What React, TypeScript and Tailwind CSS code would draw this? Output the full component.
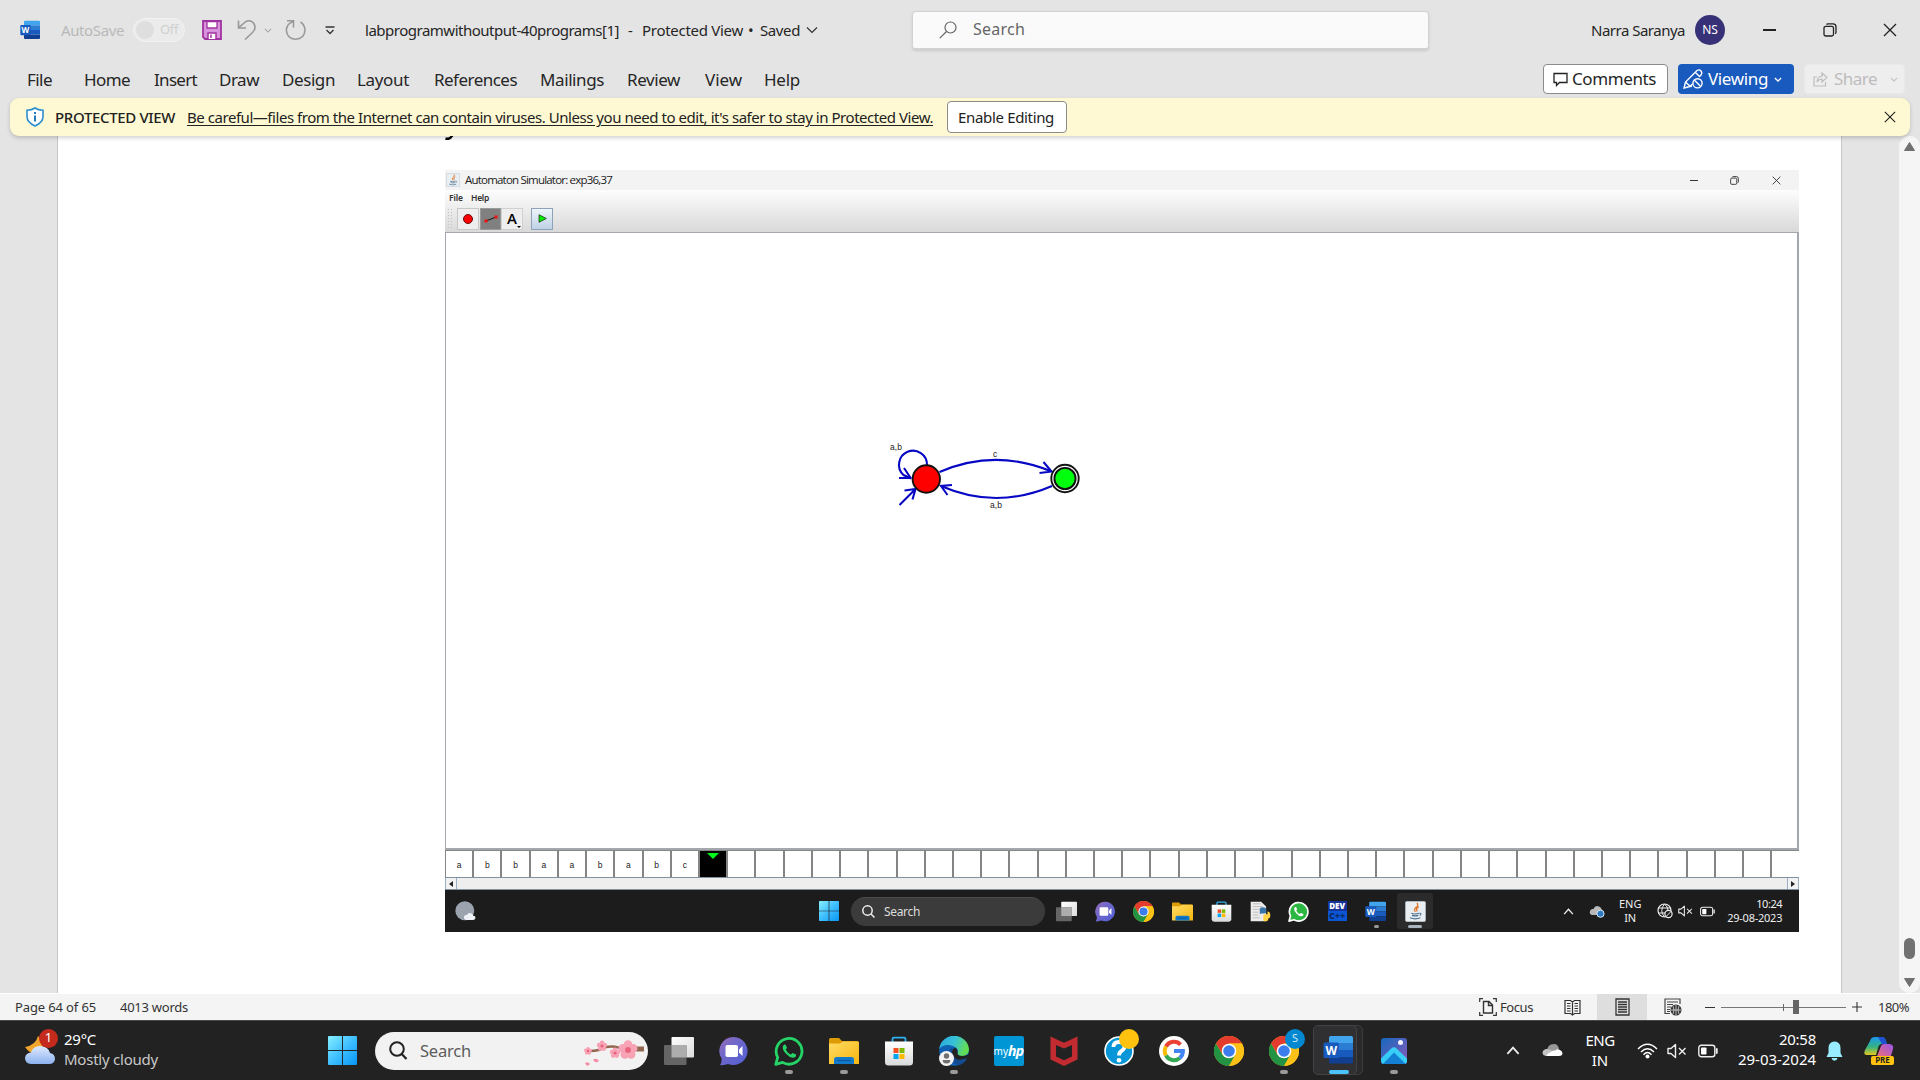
import { useLayoutEffect, useRef, type ReactNode } from "react";

/* Text that is spaced so that it exactly fills the width of its box. */
function Fit({ className, children }: { className: string; children: string }) {
  const box = useRef<HTMLDivElement>(null);
  const ink = useRef<HTMLSpanElement>(null);
  useLayoutEffect(() => {
    const b = box.current;
    const s = ink.current;
    if (!b || !s) return;
    s.style.letterSpacing = "0px";
    const diff = b.clientWidth - s.getBoundingClientRect().width;
    s.style.letterSpacing = `${diff / children.length}px`;
  }, [children]);
  return (
    <div ref={box} className={`shrink-0 whitespace-nowrap ${className}`}>
      <span ref={ink}>{children}</span>
    </div>
  );
}

type IconProps = { className?: string };

function Svg({ className = "", box = "0 0 30 30", children }: { className?: string; box?: string; children: ReactNode }) {
  return (
    <svg viewBox={box} className={`block shrink-0 ${className}`} fill="none">
      {children}
    </svg>
  );
}

function WordIcon({ className }: IconProps) {
  return (
    <Svg className={className}>
      <path d="M6 2.500Q6 1 7.500 1H28.500Q30 1 30 2.500V8H6z" fill="#41a5ee" />
      <path d="M6 8H30V15H6z" fill="#2b7cd3" />
      <path d="M6 15H30V22H6z" fill="#185abd" />
      <path d="M6 22H30V27Q30 28.500 28.500 28.500H7.500Q6 28.500 6 27z" fill="#103f91" />
      <rect x="0.500" y="7.500" width="15.500" height="15.500" rx="1.500" fill="#185abd" />
      <text x="8.200" y="19.600" textAnchor="middle" fontFamily="Noto Sans" fontWeight="700" fontSize="12" fill="#fff">W</text>
    </Svg>
  );
}

function ChromeIcon({ className }: IconProps) {
  return (
    <Svg className={className}>
      <circle cx="15" cy="15" r="15" fill="#fbc116" />
      <path d="M15 7.500H28A15 15 0 0 0 2 7.500L8.500 18.500z" fill="#e33b2e" />
      <path d="M2 7.500A15 15 0 0 0 15 30L21.500 18.750L15 22L8.500 18.750z" fill="#229342" />
      <path d="M21.500 18.750L15 30A15 15 0 0 0 28 7.500H15z" fill="#fbc116" />
      <circle cx="15" cy="15" r="7.300" fill="#fff" />
      <circle cx="15" cy="15" r="5.800" fill="#3b7ded" />
    </Svg>
  );
}

function TeamsIcon({ className }: IconProps) {
  return (
    <Svg className={className}>
      <defs>
        <linearGradient id="teams" x1="0" y1="0" x2="1" y2="1">
          <stop offset="0" stopColor="#9a6cb4" />
          <stop offset="0.350" stopColor="#7468c8" />
          <stop offset="1" stopColor="#4f5fd6" />
        </linearGradient>
      </defs>
      <path d="M15 1A14.300 14 0 1 1 9 28Q5 29.500 1 29Q3 26 2.600 22.500A14.300 14 0 0 1 15 1z" fill="url(#teams)" />
      <rect x="6.500" y="9" width="12.500" height="12" rx="1.800" fill="#fff" />
      <path d="M20 13.500L23.500 10V20L20 16.500z" fill="#fff" />
    </Svg>
  );
}

function FolderIcon({ className }: IconProps) {
  return (
    <Svg className={className}>
      <defs>
        <linearGradient id="folder" x1="0" y1="0" x2="1" y2="1">
          <stop offset="0" stopColor="#ffdc66" />
          <stop offset="1" stopColor="#f7b50e" />
        </linearGradient>
      </defs>
      <path d="M0 3.500Q0 2 1.500 2H10L13 5H28Q30 5 30 7V16H0z" fill="#dd9b06" />
      <path d="M0 7.500H11L14 5.500H28.500Q30 5.500 30 7V28H0z" fill="url(#folder)" />
      <path d="M5 28V23.500Q5 21 7.500 21H22.500Q25 21 25 23.500V28z" fill="#117acb" />
      <path d="M8 24.500H22" stroke="#0a56a0" strokeWidth="1.200" />
    </Svg>
  );
}

function StoreIcon({ className }: IconProps) {
  return (
    <Svg className={className}>
      <defs>
        <linearGradient id="store" x1="0" y1="0" x2="0" y2="1">
          <stop offset="0" stopColor="#fff" />
          <stop offset="1" stopColor="#d9dadb" />
        </linearGradient>
      </defs>
      <path d="M8.500 6V3Q8.500 1.700 9.800 1.700H20.200Q21.500 1.700 21.500 3V6" stroke="#2db0ee" strokeWidth="1.800" />
      <path d="M1 5.500H29V26Q29 29.500 25.500 29.500H4.500Q1 29.500 1 26z" fill="url(#store)" />
      <path d="M9.500 12H14.500V17H9.500z" fill="#f25022" />
      <path d="M15.500 12H20.500V17H15.500z" fill="#7fba00" />
      <path d="M9.500 18H14.500V23H9.500z" fill="#00a4ef" />
      <path d="M15.500 18H20.500V23H15.500z" fill="#ffb900" />
    </Svg>
  );
}

function TaskViewIcon({ className }: IconProps) {
  return (
    <Svg className={className}>
      <defs>
        <linearGradient id="tv" x1="0" y1="0" x2="1" y2="1">
          <stop offset="0" stopColor="#fff" />
          <stop offset="1" stopColor="#dcdcdc" />
        </linearGradient>
      </defs>
      <rect x="7.500" y="1" width="22.500" height="20.500" rx="1" fill="url(#tv)" />
      <rect x="0" y="9" width="22.500" height="20" rx="1" fill="#656565" />
      <path d="M7.500 9H22.500V21.500H7.500z" fill="#adadad" />
    </Svg>
  );
}

function StartIcon({ className }: IconProps) {
  return (
    <Svg className={className}>
      <defs>
        <linearGradient id="win" gradientUnits="userSpaceOnUse" x1="0" y1="0" x2="30" y2="30">
          <stop offset="0" stopColor="#86f0ff" />
          <stop offset="0.500" stopColor="#3fbfff" />
          <stop offset="1" stopColor="#0795f5" />
        </linearGradient>
      </defs>
      <path d="M0 1Q0 0 1 0H14.500V14.500H0zM15.500 0H29Q30 0 30 1V14.500H15.500zM0 15.500H14.500V30H1Q0 30 0 29zM15.500 15.500H30V29Q30 30 29 30H15.500z" fill="url(#win)" />
    </Svg>
  );
}

const PHONE =
  "M10.500 8.500Q9 9 8.700 11Q8.500 14 12 17.700Q15.500 21.500 19 21.800Q22 21.700 22.300 18.800L18.800 17Q18 17 17 18.600Q13.500 17.500 11.700 13.600L13 12L11.700 8.700z";

function WhatsAppIcon({ className }: IconProps) {
  return (
    <Svg className={className}>
      <path d="M1.800 28.300L3.700 21.400A12.900 12.900 0 1 1 8.500 26.400z" stroke="#25d366" strokeWidth="2.800" strokeLinejoin="round" />
      <path d={PHONE} fill="#25d366" />
    </Svg>
  );
}

function WhatsAppFilled({ className }: IconProps) {
  return (
    <Svg className={className}>
      <path d="M1.500 28.700L3.500 21.400A13.200 13.200 0 1 1 8.500 26.700z" fill="#2cb742" stroke="#fff" strokeWidth="2.400" strokeLinejoin="round" />
      <path d={PHONE} fill="#fff" />
    </Svg>
  );
}

function JavaIcon({ className }: IconProps) {
  return (
    <Svg className={className}>
      <rect x="0.500" y="0.500" width="29" height="29" rx="2.500" fill="#e9eef3" stroke="#aeb8c2" />
      <path d="M17 3Q20 6 15.500 9.500Q12 12.500 15 15.500M19.500 8Q15 11 17.500 15" stroke="#df7a32" strokeWidth="2" />
      <path d="M9 17.500Q14 19.500 20 17.500M10 20.500Q14.500 22 19 20.500M7 24Q15 27 22 24M20.500 17.500Q25 17 21 21" stroke="#4d7390" strokeWidth="1.600" />
    </Svg>
  );
}

function EdgeIcon({ className }: IconProps) {
  return (
    <Svg className={className}>
      <defs>
        <linearGradient id="edgeA" x1="0" y1="0" x2="1" y2="0.300">
          <stop offset="0" stopColor="#2aa6dd" />
          <stop offset="0.550" stopColor="#38c1d8" />
          <stop offset="1" stopColor="#62dd53" />
        </linearGradient>
      </defs>
      <circle cx="15" cy="15" r="14.800" fill="#0f62b4" />
      <path d="M0.200 13A15 15 0 0 1 30 13Q30 20 23 20Q18 20 18.500 17Q20 12 14 10Q5 7 0.200 13z" fill="url(#edgeA)" />
      <path d="M18.500 17Q19 12 15 12Q12 14 13.500 19Q15.500 24 21 24L28.200 22.500L31 23V17Q28 20.300 23 20Q18.500 20 18.500 17z" fill="#222" />
      <path d="M10 16Q10 26 19 29.300Q25 28 28 22.500Q22 25 17 23Q12 20 13 12Q10 13 10 16z" fill="#134a91" />
      <circle cx="7.500" cy="22.500" r="7.500" fill="#f4f4f4" />
      <circle cx="7.500" cy="20" r="2.700" fill="#707070" />
      <path d="M3.700 24H11.300Q11.500 27.500 7.500 27.500Q3.500 27.500 3.700 24z" fill="#707070" />
    </Svg>
  );
}

function McAfeeIcon({ className }: IconProps) {
  return (
    <Svg className={className}>
      <path d="M1.500 0.500L15 6.700L28.500 0.500V23.500L15 30L1.500 23.500z" fill="#c22c30" />
      <path d="M7 9L15 12.600L23 9V20.500L15 24.300L7 20.500z" fill="#222" />
    </Svg>
  );
}

function HelpIcon({ className }: IconProps) {
  return (
    <Svg className={className}>
      <circle cx="15" cy="15" r="14" fill="#0796d7" stroke="#fff" strokeWidth="1.600" />
      <path d="M9.500 11Q9.500 6 15 6Q20.500 6 20.500 10.500Q20.500 13 17.500 15Q15 16.500 15 19.500" stroke="#fff" strokeWidth="3.800" />
      <circle cx="15" cy="24.300" r="2.300" fill="#fff" />
    </Svg>
  );
}

function GoogleIcon({ className }: IconProps) {
  return (
    <Svg className={className}>
      <circle cx="15" cy="15" r="15" fill="#fff" />
      <g strokeWidth="4">
        <path d="M7 10.500A9 9 0 0 1 21.500 8.600" stroke="#ea4335" />
        <path d="M7 10.500A9 9 0 0 0 7 19.500" stroke="#fbbc05" />
        <path d="M7 19.500A9 9 0 0 0 20.800 21.900" stroke="#34a853" />
        <path d="M20.800 21.900A8.800 8.800 0 0 0 23.900 15H15" stroke="#4285f4" />
      </g>
    </Svg>
  );
}

function PhotosIcon({ className }: IconProps) {
  return (
    <Svg className={className} box="0 0 26 26">
      <defs>
        <linearGradient id="ph1" x1="0" y1="0" x2="1" y2="1">
          <stop offset="0" stopColor="#1468bd" />
          <stop offset="1" stopColor="#8c5bbd" />
        </linearGradient>
        <linearGradient id="ph2" x1="0" y1="1" x2="1" y2="0">
          <stop offset="0" stopColor="#2fc8f5" />
          <stop offset="1" stopColor="#3fd2f8" />
        </linearGradient>
      </defs>
      <rect width="26" height="26" rx="3" fill="url(#ph1)" />
      <path d="M2 26L13 14L26 23Q26 26 23 26z" fill="#1380d4" />
      <path d="M0 20.500L10.500 10.200Q13 8 15.500 10.500L26 20.500V23Q26 25 24.500 25.700L13 14.500L2 26Q0 25.500 0 23z" fill="url(#ph2)" />
      <circle cx="19.500" cy="4.500" r="2.500" fill="#f3f3fb" />
    </Svg>
  );
}

function Speaker({ className }: IconProps) {
  return (
    <Svg className={className} box="0 0 20 16">
      <path d="M1 5.500H4L8.500 1.500V14.500L4 10.500H1z" stroke="#eee" strokeWidth="1.400" strokeLinejoin="round" />
      <path d="M12 5L18.500 11.500M18.500 5L12 11.500" stroke="#eee" strokeWidth="1.400" />
    </Svg>
  );
}

function Battery({ className }: IconProps) {
  return (
    <Svg className={className} box="0 0 20 14">
      <rect x="0.800" y="1.300" width="16" height="11.400" rx="2.500" stroke="#eee" strokeWidth="1.400" />
      <rect x="3" y="3.500" width="5.500" height="7" rx="0.800" fill="#fff" />
      <path d="M18.800 5V9" stroke="#eee" strokeWidth="1.800" strokeLinecap="round" />
    </Svg>
  );
}

function Chevron({ className, up = false, color = "#333", width = 1.5 }: { className: string; up?: boolean; color?: string; width?: number }) {
  return (
    <Svg className={className} box="0 0 12 8">
      <path d={up ? "M1 7L6 1.500L11 7" : "M1 1.500L6 6.500L11 1.500"} stroke={color} strokeWidth={width} />
    </Svg>
  );
}

function Cross({ className }: IconProps) {
  return (
    <Svg className={className} box="0 0 14 14">
      <path d="M1 1L13 13M13 1L1 13" stroke="#222" strokeWidth="1.300" />
    </Svg>
  );
}

function Restore({ className }: IconProps) {
  return (
    <Svg className={className} box="0 0 14 14">
      <rect x="1" y="3.300" width="9.500" height="9.700" rx="1.800" stroke="#222" strokeWidth="1.300" />
      <path d="M3.500 1.500Q4 0.900 5 0.900H10Q13 0.900 13 4V9Q13 10 12.300 10.700" stroke="#222" strokeWidth="1.300" />
    </Svg>
  );
}

function TitleBar() {
  return (
    <div className="flex h-[60px] items-center text-[15px] text-[#262626]">
      <WordIcon className="ml-[20px] size-[20px]" />
      <Fit className="ml-[21px] w-[63px] text-[#b9b9b9]">AutoSave</Fit>
      <div className="ml-[9px] flex h-[24px] w-[52px] items-center rounded-full border border-[#f2f2f2] bg-[#ebebeb]">
        <div className="ml-[2px] size-[18px] rounded-full bg-[#dedede]" />
        <Fit className="ml-[6px] w-[18px] text-[13px] text-[#d0d0d0]">Off</Fit>
      </div>
      <Svg className="ml-[17px] size-[20px]" box="0 0 20 20">
        <path d="M1 1H19V19H3L1 17z" fill="#d893dc" stroke="#a0339f" strokeWidth="1.800" />
        <path d="M5 1.500H15V8H5z" fill="#fff" stroke="#a0339f" strokeWidth="1.300" />
        <path d="M6 19V13H14V19" fill="#fff" stroke="#a0339f" strokeWidth="1.500" />
        <path d="M9 14.500V18" stroke="#a0339f" strokeWidth="1.500" />
      </Svg>
      <Svg className="ml-[15px] h-[20px] w-[19px]" box="0 0 19 20">
        <path d="M1.500 0.500V8H9M1.800 7.700L7 3Q12 -1.500 16.500 3Q20 8 15.500 12.500L8 19.500" stroke="#999" strokeWidth="1.600" />
      </Svg>
      <Chevron className="ml-[8px] h-[5px] w-[8px]" color="#a5a5a5" width={1.8} />
      <Svg className="ml-[13px] h-[20px] w-[21px]" box="0 0 21 20">
        <path d="M2 0.700H8.500V7.500M8 1.500Q2 3.500 1.300 10Q2 19 10.500 19.200Q19.500 19 20 10Q19.500 4.500 15.500 2" stroke="#999" strokeWidth="1.600" />
      </Svg>
      <Svg className="ml-[19px] h-[9px] w-[10px]" box="0 0 10 9">
        <path d="M0.500 1H9.500M1.500 4L5 7.500L8.500 4" stroke="#333" strokeWidth="1.300" />
      </Svg>
      <Fit className="ml-[30px] w-[254px]">labprogramwithoutput-40programs[1]</Fit>
      <div className="ml-[9px] w-[14px]">-</div>
      <Fit className="w-[101px]">Protected View</Fit>
      <div className="ml-[4px] w-[13px] pl-px">•</div>
      <Fit className="w-[40px]">Saved</Fit>
      <Chevron className="ml-[6px] h-[8px] w-[12px]" width={1.2} />
      <div className="ml-[94px] flex h-[39px] w-[517px] items-center rounded-[4px] border border-b-2 border-[#d2d2d2] bg-[#fafafa] shadow-sm">
        <Svg className="ml-[26px] h-[18px] w-[18px]" box="0 0 18 18">
          <circle cx="11.500" cy="6.500" r="5.500" stroke="#666" strokeWidth="1.200" />
          <path d="M7.500 10.500L0.800 17.200" stroke="#666" strokeWidth="1.200" />
        </Svg>
        <Fit className="ml-[16px] w-[52px] pb-[2px] text-[16px] text-[#666]">Search</Fit>
      </div>
      <Fit className="ml-[162px] w-[94px]">Narra Saranya</Fit>
      <div className="ml-[10px] flex size-[30px] shrink-0 items-center justify-center rounded-full bg-[#373277] text-[12px] text-white">NS</div>
      <div className="ml-[38px] h-[1.500px] w-[13px] bg-[#222]" />
      <Restore className="ml-[47px] size-[14px]" />
      <Cross className="ml-[46px] size-[14px]" />
    </div>
  );
}

function RibbonTabs() {
  return (
    <div className="flex h-[38px] items-center text-[17px] text-[#262626]">
      <div className="flex pt-[2px]">
        <Fit className="ml-[27px] w-[25px]">File</Fit>
        <Fit className="ml-[32px] w-[46px]">Home</Fit>
        <Fit className="ml-[24px] w-[43px]">Insert</Fit>
        <Fit className="ml-[22px] w-[40px]">Draw</Fit>
        <Fit className="ml-[23px] w-[53px]">Design</Fit>
        <Fit className="ml-[22px] w-[52px]">Layout</Fit>
        <Fit className="ml-[25px] w-[83px]">References</Fit>
        <Fit className="ml-[23px] w-[64px]">Mailings</Fit>
        <Fit className="ml-[23px] w-[53px]">Review</Fit>
        <Fit className="ml-[25px] w-[37px]">View</Fit>
        <Fit className="ml-[22px] w-[36px]">Help</Fit>
      </div>
      <div className="ml-[743px] flex h-[30px] w-[125px] items-center rounded-[4px] border border-[#8b8b8b] bg-white">
        <Svg className="ml-[9px] h-[15px] w-[15px]" box="0 0 15 15">
          <path d="M1 1.500H14V10.500H6.500L3.500 13.500V10.500H1z" stroke="#222" strokeWidth="1.300" />
        </Svg>
        <Fit className="ml-[4px] w-[84px]">Comments</Fit>
      </div>
      <div className="ml-[10px] flex h-[30px] w-[116px] items-center rounded-[4px] bg-[#185abd] text-white">
        <Svg className="ml-[5px] h-[20px] w-[20px]" box="0 0 20 20">
          <path d="M9 17Q5 18 1 19L2.500 13L14 1.500Q16.500 0 18 2Q19.500 4 18 6L16 8M12.500 3.500L16 7M2.500 13L7 17.300L9.500 15" stroke="#fff" strokeWidth="1.400" />
          <circle cx="14.500" cy="14.300" r="4.600" stroke="#fff" strokeWidth="1.400" />
          <path d="M11.300 11L17.700 17.600" stroke="#fff" strokeWidth="1.400" />
        </Svg>
        <Fit className="ml-[5px] w-[60px]">Viewing</Fit>
        <Chevron className="ml-[6px] h-[5px] w-[8px]" color="#fff" width={2} />
      </div>
      <div className="ml-[10px] flex h-[30px] w-[101px] items-center rounded-[4px] border border-[#e9e9e9] bg-[#eeeeee] text-[#bdbdbd]">
        <Svg className="ml-[8px] h-[15px] w-[15px]" box="0 0 15 15">
          <path d="M4 5H1V14H12.500V10M4 10Q4.500 4.500 9 4V1L14 5.500L9 10V7Q6 7 4 10z" stroke="#bdbdbd" strokeWidth="1.200" />
        </Svg>
        <Fit className="ml-[6px] w-[43px]">Share</Fit>
        <Chevron className="ml-[13px] h-[5px] w-[8px]" color="#bdbdbd" width={1.8} />
      </div>
    </div>
  );
}

function ProtectedBar() {
  return (
    <div className="relative z-10 mx-[10px] flex h-[38px] items-center rounded-[9px] bg-[#fef9d3] text-[15px] text-[#222] shadow-[0_2px_4px_rgba(0,0,0,0.18)]">
      <Svg className="ml-[16px] h-[20px] w-[18px]" box="0 0 18 20">
        <path d="M9 1Q12 3.300 17 3.300V9.500Q17 15.500 9 19Q1 15.500 1 9.500V3.300Q6 3.300 9 1z" fill="#fff" stroke="#2b8fd0" strokeWidth="1.600" />
        <path d="M9 8.500V14.500M9 5V7" stroke="#1d7cc0" strokeWidth="2" />
      </Svg>
      <Fit className="ml-[11px] w-[120px] font-medium">PROTECTED VIEW</Fit>
      <Fit className="ml-[12px] w-[746px] underline underline-offset-2">
        Be careful—files from the Internet can contain viruses. Unless you need to edit, it's safer to stay in Protected View.
      </Fit>
      <div className="ml-[14px] flex h-[32px] w-[120px] items-center rounded-[4px] border border-[#8b8b8b] bg-white">
        <Fit className="ml-[10px] w-[96px]">Enable Editing</Fit>
      </div>
      <Cross className="ml-[817px] size-[12px]" />
    </div>
  );
}

const TAPE = ["a", "b", "b", "a", "a", "b", "a", "b", "c"];
const CELLS = Array.from({ length: 47 }, (_, i) => i);

function Diagram() {
  return (
    <svg viewBox="860 420 250 110" className="ml-[414px] mt-[187px] block h-[110px] w-[250px]" fill="none">
      <g stroke="#0808c4" strokeWidth="2.100">
        <path d="M927 465A14 14 0 1 0 903.500 475L911 478.500M899 478H911.500M904 468L911 478.500" />
        <path d="M899.500 505L915.500 489M904.500 490.500L915.500 489L912.500 499.500" />
        <path d="M939.500 472Q995 448 1051.500 471.500M1039.500 473L1051.500 471.500L1043.500 462" />
        <path d="M1052 486Q996 510 941 486M952 485L941 486L947.500 495" />
      </g>
      <circle cx="926.300" cy="479" r="13.700" fill="#fe0000" stroke="#111" strokeWidth="1.900" />
      <circle cx="1065" cy="478.500" r="13.700" fill="#fff" stroke="#111" strokeWidth="1.900" />
      <circle cx="1065" cy="478.500" r="10.600" fill="#00ff0c" stroke="#111" strokeWidth="1.900" />
      <g fill="#222" fontFamily="Liberation Sans" fontSize="8.500" textAnchor="middle">
        <text x="896" y="450">a,b</text>
        <text x="995" y="456.500">c</text>
        <text x="996" y="507.500">a,b</text>
      </g>
    </svg>
  );
}

function SimulatorTaskbar() {
  return (
    <div className="flex h-[42px] items-center bg-[#1c1c1c] text-white">
      <Svg className="ml-[10px] size-[21px]">
        <circle cx="14" cy="14" r="13.500" fill="#9aa3ae" />
        <path d="M16 27Q12 26 13 22Q14 19.500 17 20Q19 15.500 24 18Q26 19 26 21Q30 21.500 29 25Q28.500 27 26 27z" fill="#eef1f6" />
      </Svg>
      <StartIcon className="ml-[343px] size-[20px]" />
      <div className="ml-[12px] flex h-[29px] w-[194px] items-center rounded-full border-t border-[#4a4a4a] bg-[#3b3b3b]">
        <Svg className="ml-[11px] size-[13px]" box="0 0 13 13">
          <circle cx="5.500" cy="5.500" r="4.700" stroke="#eee" strokeWidth="1.500" />
          <path d="M9 9L12.500 12.500" stroke="#eee" strokeWidth="1.500" />
        </Svg>
        <Fit className="ml-[9px] w-[36px] text-[12px] text-[#ddd]">Search</Fit>
      </div>
      <div className="ml-[2px] flex items-center">
        {[TaskViewIcon, TeamsIcon, ChromeIcon, FolderIcon, StoreIcon].map((Icon, i) => (
          <div key={i} className="flex w-[38.700px] justify-center">
            <Icon className="size-[21px]" />
          </div>
        ))}
        <div className="flex w-[38.700px] justify-center">
          <Svg className="ml-[2px] size-[21px]">
            <path d="M1 1H16L23 8V29H1z" fill="#ececec" />
            <path d="M4 4H15M4 8H18M4 12H14M4 16H12M4 20H12M4 24H14" stroke="#aaa" />
            <path d="M14 19V12Q14 9 18 9Q23 9 23 12V16Q23 18 20 18H16Z" fill="#3874a8" />
            <path d="M19 27V21Q19 19 22 19H25V15Q29 15 29 20Q29 25 26 25V27Q25 29 22 29Q19 29 19 27z" fill="#ffd343" />
          </Svg>
        </div>
        <div className="flex w-[38.700px] justify-center">
          <WhatsAppFilled className="size-[21px]" />
        </div>
        <div className="flex w-[38.700px] justify-center">
          <div className="h-[20px] w-[19px] overflow-hidden bg-[#16349b] text-center text-[8px] leading-[10px] font-black">
            DEV
            <div className="bg-[#0a56d5] text-[9px] leading-[10px] text-[#0c2a66]">C++</div>
          </div>
        </div>
        <div className="relative flex w-[38.700px] justify-center">
          <WordIcon className="size-[21px]" />
          <div className="absolute -bottom-[6px] left-[17px] h-[3px] w-[5px] rounded-full bg-[#999]" />
        </div>
        <div className="relative ml-[2px] flex h-[36px] w-[36px] items-center justify-center rounded-[3px] bg-[#2b2b2b]">
          <JavaIcon className="size-[21px]" />
          <div className="absolute bottom-[1px] h-[3px] w-[14px] rounded-full bg-[#a9b4bf]" />
        </div>
      </div>
      <Chevron className="ml-[130px] h-[7px] w-[11px]" up color="#eee" />
      <Svg className="ml-[15px] h-[13px] w-[16px]" box="0 0 16 13">
        <path d="M3 10Q0 9 1 6Q2 3.500 4.500 4Q6 0 10 1.500Q13 3 13 6V10z" fill="#b9b9b9" />
        <circle cx="11.500" cy="8.700" r="3.600" fill="#2d7cc1" stroke="#dce9f4" />
      </Svg>
      <div className="ml-[13px] w-[24px] text-center text-[11px] leading-[14px] text-[#eee]">
        <div>ENG</div>
        <div>IN</div>
      </div>
      <Svg className="ml-[15px] size-[16px]" box="0 0 16 16">
        <circle cx="7.500" cy="7.500" r="6.500" stroke="#eee" strokeWidth="1.200" />
        <path d="M1 5H14M1 10H8M7.500 1Q2 7.500 7.500 14M7.500 1Q11 4 11 7" stroke="#eee" />
        <circle cx="11.500" cy="11" r="3.600" fill="#1c1c1c" stroke="#eee" strokeWidth="1.200" />
        <path d="M9 13.500L14 8.500" stroke="#eee" />
      </Svg>
      <Speaker className="ml-[5px] h-[12px] w-[15px]" />
      <Battery className="ml-[7px] h-[11px] w-[15px]" />
      <div className="ml-[12px] flex flex-col items-end text-[11px] leading-[14px] text-[#eee]">
        <Fit className="w-[26px]">10:24</Fit>
        <Fit className="w-[55px]">29-08-2023</Fit>
      </div>
    </div>
  );
}

function Simulator() {
  return (
    <div className="ml-[387px] h-[762px] w-[1354px] overflow-hidden bg-white">
      <div className="flex h-[20px] items-center bg-[#f3f3f3] text-[11.500px] text-[#222]">
        <JavaIcon className="ml-[1px] size-[14px]" />
        <Fit className="ml-[5px] w-[147px] font-['Open_Sans']">Automaton Simulator: exp36,37</Fit>
        <div className="ml-[1078px] h-px w-[8px] bg-[#333]" />
        <Restore className="ml-[32px] size-[9px]" />
        <Cross className="ml-[33px] size-[9px]" />
      </div>
      <div className="h-[42px] bg-linear-to-b from-[#fdfdfd] to-[#d9d9d9]">
        <div className="flex h-[16px] items-center text-[8.500px] font-semibold text-[#333]">
          <Fit className="ml-[4px] w-[14px]">File</Fit>
          <Fit className="ml-[8px] w-[18px]">Help</Fit>
        </div>
        <div className="flex h-[25px] items-center">
          <div className="ml-[2px] h-[22px] w-[7px] bg-[radial-gradient(#c2c2c2_0.700px,transparent_1px)] bg-size-[3px_3px]" />
          <div className="ml-[3px] flex size-[22px] items-center justify-center border border-[#c8c8c8] bg-[#eeeeee]">
            <div className="size-[10px] rounded-full border border-[#611] bg-[#fb0000]" />
          </div>
          <div className="ml-[1px] flex h-[22px] w-[21px] items-center justify-center border border-[#9a9a9a] bg-[#808080]">
            <Svg className="h-[8px] w-[14px]" box="0 0 14 8">
              <path d="M2 6L12 2" stroke="#222" strokeWidth="1.200" />
              <path d="M0.500 4.500H3.500V7.500H0.500zM10.500 0.500H13.500V3.500H10.500z" fill="#ee1111" />
            </Svg>
          </div>
          <div className="relative flex size-[22px] items-center justify-center border border-[#d0d0d0] bg-[#eeeeee] font-['Open_Sans'] text-[15px] font-semibold text-black">
            A
            <Svg className="absolute right-px bottom-px h-[2px] w-[4px]" box="0 0 4 2">
              <path d="M0 0H4L2 2z" fill="#000" />
            </Svg>
          </div>
          <div className="ml-[8px] flex size-[22px] items-center justify-center border border-[#8fa3b8] bg-linear-to-b from-[#eef4fa] to-[#bed2e6]">
            <Svg className="h-[9px] w-[9px]" box="0 0 9 9">
              <path d="M1 0.700L8.300 4.500L1 8.300z" fill="#00ee00" stroke="#1f3a1f" strokeWidth="0.800" />
            </Svg>
          </div>
        </div>
      </div>
      <div className="flex h-[618px] border-t border-r-2 border-b-2 border-l border-[#a4a8ae]">
        <Diagram />
      </div>
      <div className="flex h-[27px] border-t border-l border-[#858585] text-[8.500px] text-[#222]">
        {CELLS.map((i) => (
          <div
            key={i}
            className={`flex w-[28.220px] shrink-0 justify-center border-r-2 border-[#858585] font-['Liberation_Sans'] leading-[29px] ${i === 9 ? "bg-black" : "bg-white"}`}
          >
            {TAPE[i]}
            {i === 9 && (
              <Svg className="mt-[2px] h-[6px] w-[12px]" box="0 0 12 6">
                <path d="M0 0H12L6 6z" fill="#00f91a" />
              </Svg>
            )}
          </div>
        ))}
      </div>
      <div className="flex h-[13px] border-y border-[#7f909f] bg-[#eeeeee]">
        <div className="flex w-[12px] items-center justify-center border-x border-[#9bb0c4] bg-[#f2f2f2]">
          <Svg className="h-[6px] w-[4px]" box="0 0 4 6">
            <path d="M4 0V6L0 3z" fill="#222" />
          </Svg>
        </div>
        <div className="flex-1" />
        <div className="flex w-[12px] items-center justify-center border-x border-[#9bb0c4] bg-[#f2f2f2]">
          <Svg className="h-[6px] w-[4px]" box="0 0 4 6">
            <path d="M0 0V6L4 3z" fill="#222" />
          </Svg>
        </div>
      </div>
      <SimulatorTaskbar />
    </div>
  );
}

function Document() {
  return (
    <div className="flex h-[857px]">
      <div className="ml-[57px] w-[1785px] overflow-hidden border-x border-[#c6c6c6] bg-white">
        <div className="h-[34px] overflow-hidden">
          <Svg className="ml-[387px] h-[4px] w-[9px]" box="0 0 9 4">
            <path d="M0.500 2.500Q5 4 7.500 -1" stroke="#000" strokeWidth="2.400" />
          </Svg>
        </div>
        <Simulator />
      </div>
      <div className="ml-[57px] flex w-[21px] flex-col items-center rounded-[10px] bg-[#f5f5f5]">
        <Svg className="mt-[6px] h-[9px] w-[11px]" box="0 0 11 9">
          <path d="M5.500 0.500L10.500 8.500H0.500z" fill="#707070" stroke="#707070" strokeLinejoin="round" />
        </Svg>
        <div className="mt-[787px] h-[21px] w-[11px] rounded-full bg-[#707070]" />
        <Svg className="mt-[19px] h-[9px] w-[11px]" box="0 0 11 9">
          <path d="M5.500 8.500L10.500 0.500H0.500z" fill="#707070" stroke="#707070" strokeLinejoin="round" />
        </Svg>
      </div>
    </div>
  );
}

function StatusBar() {
  return (
    <div className="flex h-[27px] items-center border-t border-white bg-[#f4f4f4] text-[13px] text-[#333]">
      <Fit className="ml-[15px] w-[81px] pt-[2px]">Page 64 of 65</Fit>
      <Fit className="ml-[24px] w-[68px] pt-[2px]">4013 words</Fit>
      <Svg className="ml-[1291px] size-[18px]" box="0 0 18 18">
        <path d="M4 0.700H0.700V4M14 0.700H17.300V4M4 17.300H0.700V14M14 17.300H17.300V14" stroke="#333" strokeWidth="1.200" />
        <path d="M4.500 3.500H10L13.500 7V15H4.500zM9.500 3.500V7.500H13.500" stroke="#333" strokeWidth="1.400" />
      </Svg>
      <Fit className="ml-[3px] w-[33px] pt-[2px]">Focus</Fit>
      <Svg className="ml-[31px] h-[17px] w-[17px]" box="0 0 17 17">
        <path d="M1 1.500H6.500L8.500 3L10.500 1.500H16V14.500H10.500L8.500 16L6.500 14.500H1zM8.500 3V16M3 4.500H6.500M3 7H6.500M3 9.500H6.500M3 12H6.500M10.500 4.500H14M10.500 7H14M10.500 9.500H14M10.500 12H14" stroke="#333" strokeWidth="1.200" />
      </Svg>
      <div className="ml-[16px] flex h-[26px] w-[50px] items-center justify-center bg-[#dedede]">
        <Svg className="h-[18px] w-[15px]" box="0 0 15 18">
          <path d="M1 1H14V17H1zM3 4H12M3 6.500H12M3 9H12M3 11.500H12M3 14H12" stroke="#333" strokeWidth="1.300" />
        </Svg>
      </div>
      <Svg className="ml-[17px] size-[18px]" box="0 0 18 18">
        <path d="M6 15.500H1V1H16V6M3 4H14M3 6.500H9M3 9H7M3 11.500H6M3 13.500H6" stroke="#444" strokeWidth="1.200" />
        <circle cx="12" cy="12" r="5.500" fill="#333" />
        <path d="M7 12H17M12 7V17M9 8Q11 12 9 16M15 8Q13 12 15 16" stroke="#f4f4f4" strokeWidth="0.700" />
      </Svg>
      <div className="ml-[23px] h-px w-[10px] bg-[#333]" />
      <div className="ml-[6px] flex h-[14px] w-[125px] items-center">
        <div className="h-px w-[62px] bg-[#777]" />
        <div className="h-[7px] w-px bg-[#666]" />
        <div className="h-px w-[9px] bg-[#777]" />
        <div className="h-[14px] w-[6px] bg-[#666]" />
        <div className="h-px flex-1 bg-[#777]" />
      </div>
      <Svg className="ml-[6px] size-[10px]" box="0 0 10 10">
        <path d="M0 5H10M5 0V10" stroke="#333" strokeWidth="1.100" />
      </Svg>
      <Fit className="ml-[16px] w-[31px] pt-[2px]">180%</Fit>
    </div>
  );
}

function Slot({ children, running = false }: { children: ReactNode; running?: boolean }) {
  return (
    <div className="relative flex h-[60px] w-[55px] shrink-0 items-center justify-center">
      {children}
      {running && <div className="absolute top-[49px] left-[24px] h-[4px] w-[8px] rounded-full bg-[#9a9a9a]" />}
    </div>
  );
}

function Flower({ x, y, r }: { x: number; y: number; r: number }) {
  return (
    <g transform={`translate(${x} ${y}) scale(${r})`}>
      <g fill="#f7a3b5">
        <circle cx="0" cy="-0.600" r="0.480" />
        <circle cx="0.570" cy="-0.180" r="0.480" />
        <circle cx="0.350" cy="0.500" r="0.480" />
        <circle cx="-0.350" cy="0.500" r="0.480" />
        <circle cx="-0.570" cy="-0.180" r="0.480" />
      </g>
      <circle r="0.320" fill="#e8647e" />
    </g>
  );
}

function Taskbar() {
  return (
    <div className="flex h-[60px] items-center border-t border-[#45474a] bg-[#222222] text-white">
      <div className="relative mb-[10px] ml-[24px] h-[38px] w-[36px] shrink-0">
        <Svg className="h-[38px] w-[32px]" box="0 0 32 38">
          <defs>
            <linearGradient id="cloud" x1="0" y1="0" x2="0" y2="1">
              <stop offset="0" stopColor="#dfeaff" />
              <stop offset="1" stopColor="#8db2ef" />
            </linearGradient>
          </defs>
          <path d="M14 9Q12 18 1 20Q8 30 17 25Q22 15 14 9z" fill="#f2a52c" />
          <path d="M7 37Q1 36.500 1 31Q1.500 26 7 25.500Q9 19 16 19Q24 19 26 26Q31 27 31 32Q30.500 37 25 37z" fill="url(#cloud)" />
        </Svg>
        <div className="absolute top-[2px] left-[15px] flex size-[19px] items-center justify-center rounded-full bg-[#c42b1c] text-[13px]">1</div>
      </div>
      <div className="mb-[4px] ml-[4px] text-[15px] leading-[20px]">
        <Fit className="w-[32px]">29°C</Fit>
        <Fit className="w-[94px] text-[#c8c8c8]">Mostly cloudy</Fit>
      </div>
      <StartIcon className="ml-[170px] size-[29px]" />
      <div className="ml-[18px] flex h-[38px] w-[273px] shrink-0 items-center rounded-full bg-[#f2f2f2]">
        <Svg className="ml-[14px] size-[19px]" box="0 0 19 19">
          <circle cx="8" cy="8" r="6.800" stroke="#222" strokeWidth="2" />
          <path d="M12.500 12.800L17.500 18" stroke="#222" strokeWidth="2.200" />
        </Svg>
        <Fit className="ml-[12px] w-[51px] pt-[1px] text-[16.500px] text-[#5c5c5c]">Search</Fit>
        <Svg className="mt-[4px] ml-[113px] h-[26px] w-[61px]" box="0 0 61 26">
          <path d="M5 11Q16 11 22 7Q32 5 40 10L60 9" stroke="#91664f" strokeWidth="2.500" />
          <path d="M50 9H60" stroke="#91664f" strokeWidth="5" />
          <Flower x={4} y={11} r={3.8} />
          <Flower x={18} y={6} r={5} />
          <Flower x={31} y={13} r={5} />
          <Flower x={44} y={10} r={9} />
          <path d="M9 20Q12 17 15 21Q12 24 9 20zM1 23Q4 21 6 24Q3 28 1 23z" fill="#f58fa5" />
        </Svg>
      </div>
      <div className="ml-[3px] flex">
        <Slot>
          <TaskViewIcon className="size-[30px]" />
        </Slot>
        <Slot>
          <TeamsIcon className="size-[30px]" />
        </Slot>
        <Slot running>
          <WhatsAppIcon className="size-[30px]" />
        </Slot>
        <Slot running>
          <FolderIcon className="size-[30px]" />
        </Slot>
        <Slot>
          <StoreIcon className="size-[30px]" />
        </Slot>
        <Slot running>
          <EdgeIcon className="size-[30px]" />
        </Slot>
        <Slot>
          <div className="flex size-[30px] items-center justify-center rounded-[2px] bg-[#0096d6] text-[10px] leading-none">
            my<span className="text-[14px] font-bold italic tracking-tighter">hp</span>
          </div>
        </Slot>
        <Slot>
          <McAfeeIcon className="size-[30px]" />
        </Slot>
        <Slot>
          <HelpIcon className="size-[30px]" />
          <div className="absolute top-[8px] left-[28px] size-[20px] rounded-full bg-[#ffc20e]" />
        </Slot>
        <Slot>
          <GoogleIcon className="size-[30px]" />
        </Slot>
        <Slot>
          <ChromeIcon className="size-[30px]" />
        </Slot>
        <Slot running>
          <ChromeIcon className="size-[30px]" />
          <div className="absolute top-[8px] left-[29px] flex size-[20px] items-center justify-center rounded-full bg-[#0288d1] text-[11px] text-[#cfe9f8]">S</div>
        </Slot>
        <div className="relative h-[60px] w-[55px] shrink-0">
          <div className="absolute top-[4px] left-[10px] h-[50px] w-[42px] rounded-[5px] border border-[#3d3d40] bg-[#2a2a2c]" />
          <div className="absolute top-[4px] left-[2px] flex h-[50px] w-[44px] items-center justify-center rounded-[5px] border border-[#434346] bg-[#303033] pl-[5px]">
            <WordIcon className="size-[30px]" />
          </div>
          <div className="absolute top-[49px] left-[18px] h-[4px] w-[20px] rounded-full bg-[#4cc2ff]" />
        </div>
        <Slot running>
          <PhotosIcon className="size-[26px]" />
        </Slot>
      </div>
      <Chevron className="ml-[85px] h-[9px] w-[14px]" up color="#eee" width={1.6} />
      <Svg className="mb-[2px] ml-[22px] h-[14px] w-[21px]" box="0 0 21 14">
        <path d="M5 9Q5 1 12 1Q16 1 17 6L12 10z" fill="#989898" />
        <path d="M4 13Q0.500 12.500 0.500 9.500Q1 6 5 6Q8 6 13 10z" fill="#c2c2c2" />
        <path d="M4 13Q9 7 13.500 7.500Q15 5.500 18 7Q20.500 8 20.500 10.500Q20 13 17 13z" fill="#fff" />
      </Svg>
      <div className="mb-[2px] ml-[20px] w-[34px] text-center text-[15px] leading-[20px]">
        <Fit className="mx-auto w-[29px]">ENG</Fit>
        <div>IN</div>
      </div>
      <Svg className="ml-[20px] h-[16px] w-[21px]" box="0 0 21 16">
        <path d="M1 6Q10.500 -3.500 20 6M4 9Q10.500 2.500 17 9M6.500 11.700Q10.500 7.500 14.500 11.700" stroke="#fff" strokeWidth="1.500" />
        <circle cx="10.500" cy="13.500" r="2" fill="#fff" />
      </Svg>
      <Speaker className="ml-[9px] h-[16px] w-[20px]" />
      <Battery className="ml-[11px] h-[14px] w-[20px]" />
      <div className="mb-[3px] ml-[20px] flex flex-col items-end text-[15px] leading-[20px]">
        <Fit className="w-[37px]">20:58</Fit>
        <Fit className="w-[78px]">29-03-2024</Fit>
      </div>
      <Svg className="ml-[10px] h-[20px] w-[17px]" box="0 0 17 20">
        <path d="M8.500 0.500Q14.500 1 14.500 7V12L16.500 16H0.500L2.500 12V7Q2.500 1 8.500 0.500z" fill="#99ebff" />
        <path d="M5.500 17H11.500Q11 19.700 8.500 19.700Q6 19.700 5.500 17z" fill="#99ebff" />
      </Svg>
      <div className="relative ml-[21px] h-[30px] w-[30px] shrink-0">
        <Svg className="size-[30px]">
          <defs>
            <linearGradient id="cp1" x1="0" y1="0" x2="0" y2="1">
              <stop offset="0" stopColor="#1a98f0" />
              <stop offset="0.550" stopColor="#35b37e" />
              <stop offset="1" stopColor="#e5c820" />
            </linearGradient>
            <linearGradient id="cp2" x1="1" y1="0" x2="0" y2="1">
              <stop offset="0" stopColor="#9a55e8" />
              <stop offset="1" stopColor="#f7706b" />
            </linearGradient>
          </defs>
          <path d="M6 5Q7 1 11 1H18Q21 1 22 5L23 8H18Q15 8 14 12L12 19H3Q-1 19 1 14z" fill="url(#cp1)" />
          <path d="M14 1H18Q21 1 22 5L23 8H18z" fill="#1f4fd1" />
          <path d="M17 10Q18 8 20 8H26Q30 9 29 13L26 23H12z" fill="url(#cp2)" />
        </Svg>
        <div className="absolute top-[20px] left-[7px] flex h-[9px] w-[23px] items-center justify-center rounded-[2px] bg-[#ffc20e] text-[8px] leading-none font-bold text-[#222]">PRE</div>
      </div>
    </div>
  );
}

export default function App() {
  return (
    <div className="h-[1080px] w-[1920px] overflow-hidden bg-[#e4e4e4] font-['Noto_Sans','Open_Sans',sans-serif]">
      <TitleBar />
      <RibbonTabs />
      <ProtectedBar />
      <Document />
      <StatusBar />
      <Taskbar />
    </div>
  );
}
